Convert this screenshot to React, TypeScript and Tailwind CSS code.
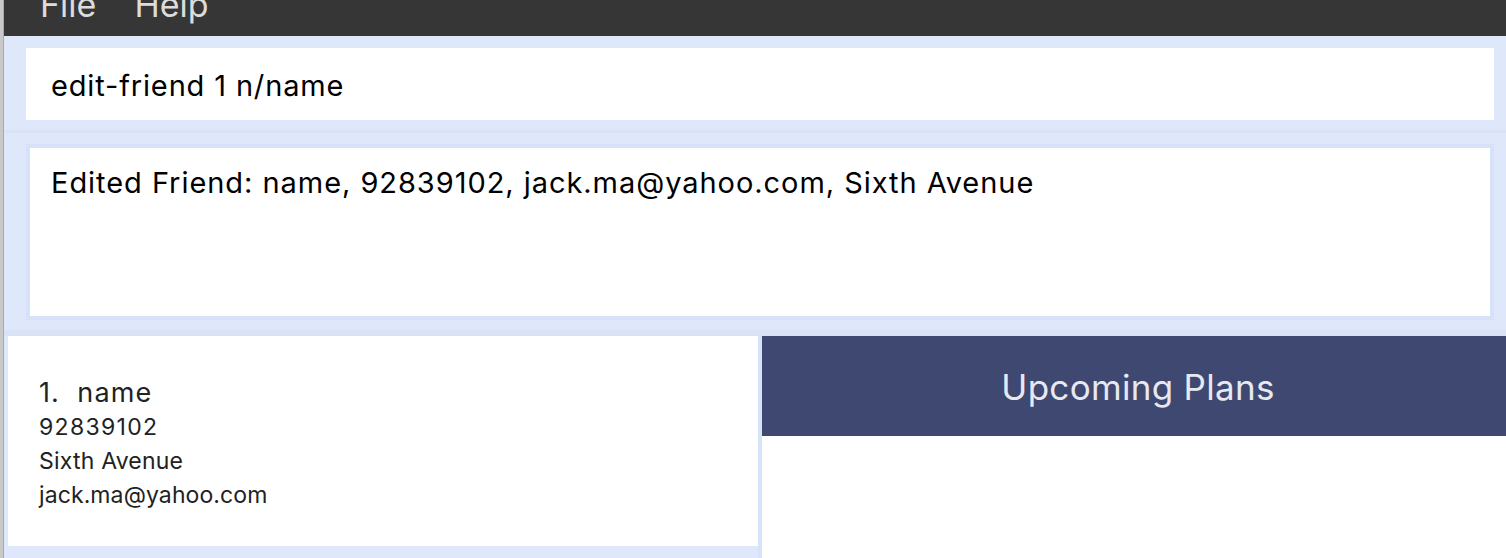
import React from 'react'

const font = { fontFamily: 'Inter, "Noto Sans", sans-serif' }

export default function App() {
  return (
    <div className="flex w-[1506px] h-[558px] overflow-hidden bg-[#dfe8fa]" style={font}>
      {/* window edge */}
      <div className="w-[4px] shrink-0 bg-[#c9c9c9] border-r border-[#a9a9a9]" />

      <div className="flex-1 flex flex-col min-w-0">
        {/* Menu bar */}
        <div className="h-[36px] shrink-0 bg-[#363636] flex items-end gap-[38px] pl-[36px] pb-[14px] overflow-hidden">
          <span className="text-[34px] leading-[34px] text-[#dcdcdc]">File</span>
          <span className="text-[34px] leading-[34px] text-[#dcdcdc]">Help</span>
        </div>

        {/* Command box */}
        <div className="pl-[22px] pr-[12px] pt-[12px] pb-[10px]">
          <div className="h-[72px] bg-white flex items-center pl-[25px] pt-[3px] text-[29px] text-black tracking-[0.85px]">
            edit-friend 1 n/name
          </div>
        </div>
        <div className="h-[3px] bg-[#d8e3f8]" />

        {/* Result display */}
        <div className="pl-[22px] pr-[12px] pt-[11px] pb-[10px]">
          <div className="h-[176px] border-4 border-[#d6e2f8] bg-white pl-[21px] pt-[13px] text-[29px] text-black tracking-[0.95px]">
            Edited Friend: name, 92839102, jack.ma@yahoo.com, Sixth Avenue
          </div>
        </div>
        <div className="h-[6px] bg-[#d8e3f8]" />

        {/* Lists */}
        <div className="flex-1 flex min-h-0">
          <div className="w-[754px] pl-[4px] pb-[12px]">
            <div className="h-full bg-white pl-[31px] pt-[40px] text-[#222222]">
              <div className="text-[27px] leading-[34px] whitespace-pre tracking-[1.1px]">1.  name</div>
              <div className="text-[23px] leading-[34px] tracking-[1.3px]">92839102</div>
              <div className="text-[23px] leading-[34px] tracking-[0.2px]">Sixth Avenue</div>
              <div className="text-[23px] leading-[34px] tracking-[0.1px]">jack.ma@yahoo.com</div>
            </div>
          </div>
          <div className="w-[4px] bg-[#d6e2f8]" />
          <div className="flex-1 flex flex-col bg-white">
            <div className="h-[100px] bg-[#3e4870] flex items-center justify-center pl-[8px] pt-[3px] text-[35px] text-[#e8e9f0] tracking-[0.3px]">
              Upcoming Plans
            </div>
          </div>
        </div>
      </div>
    </div>
  )
}
